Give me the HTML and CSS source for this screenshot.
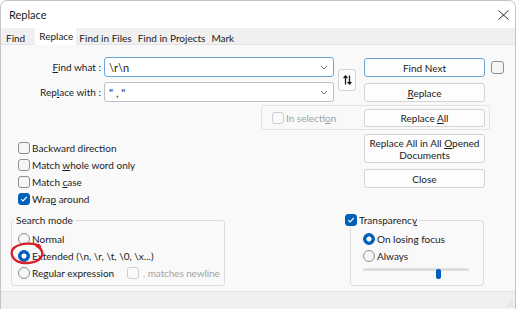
FILE: index.html
```html
<!DOCTYPE html>
<html lang="en">
<head>
  <meta charset="UTF-8" />
  <title>Replace</title>
  <link rel="stylesheet" href="styles.css">
</head>
<body>
  <div class="window">
    <div class="titlebar">
      <span class="title">Replace</span>
      <svg class="close" width="11" height="10" viewBox="0 0 11 10"><path d="M0.5 0.5L10.5 9.5M10.5 0.5L0.5 9.5" stroke="#2b2b2b" stroke-width="1" fill="none"/></svg>
    </div>

    <div class="tabs">
      <span class="tab">Find</span>
      <span class="tab active">Replace</span>
      <span class="tab">Find in Files</span>
      <span class="tab">Find in Projects</span>
      <span class="tab">Mark</span>
    </div>

    <div class="panel">
      <div class="row-top">
        <div class="fields">
          <span class="label"><u>F</u>ind what :</span>
          <div class="combo focus">
            <span>\r\n</span>
            <svg width="8" height="5" viewBox="0 0 8 5"><path d="M1 1l3 3 3-3" stroke="#6d6d6d" fill="none"/></svg>
          </div>
          <span class="label">Rep<u>l</u>ace with :</span>
          <div class="combo">
            <span>" , "</span>
            <svg width="8" height="5" viewBox="0 0 8 5"><path d="M1 1l3 3 3-3" stroke="#6d6d6d" fill="none"/></svg>
          </div>
        </div>
        <button class="swap">
          <svg width="9" height="10" viewBox="0 0 9 10"><path d="M2.5 9.5V1M0.6 3L2.5 1 4.4 3M6.5 0.5V9M4.6 7L6.5 9 8.4 7" stroke="#1b1b1b" stroke-width="1.3" fill="none"/></svg>
        </button>
        <div class="btn-col">
          <button class="btn default">Find Next</button>
          <button class="btn"><u>R</u>eplace</button>
        </div>
        <span class="check big"></span>
      </div>

      <div class="selbox">
        <label class="opt disabled"><span class="check"></span><span>In selecti<u>o</u>n</span></label>
        <button class="btn">Replace <u>A</u>ll</button>
      </div>

      <div class="row-mid">
        <div class="options">
          <label class="opt"><span class="check"></span><span>Backward direction</span></label>
          <label class="opt"><span class="check"></span><span>Match <u>w</u>hole word only</span></label>
          <label class="opt"><span class="check"></span><span>Match <u>c</u>ase</span></label>
          <label class="opt"><span class="check on"><svg width="10" height="10" viewBox="0 0 10 10"><path d="M2.2 5.2l1.8 1.8 3.8-4" stroke="#fff" stroke-width="1.1" fill="none"/></svg></span><span>Wra<u>p</u> around</span></label>
        </div>
        <div class="btn-col">
          <button class="btn tall">Replace All in All <u>O</u>pened<br>Documents</button>
          <button class="btn">Close</button>
        </div>
      </div>

      <div class="row-bottom">
        <fieldset class="group search">
          <legend>Search mode</legend>
          <label class="opt"><span class="radio"></span><span><u>N</u>ormal</span></label>
          <label class="opt marked">
            <span class="radio on"></span><span>Extended (\n, \r, \t, \0, \x...)</span>
            <svg class="circled" width="36" height="27" viewBox="0 0 36 27"><path d="M31 5.5C26 1.5 12 1.6 5.5 6.5 0.8 10.2 2.4 17.5 8.5 20.3 15 23.4 27 22.4 31.6 17 35 13 33 7.5 27.5 4.6" stroke="#d8202a" stroke-width="2.4" fill="none" stroke-linecap="round"/></svg>
          </label>
          <label class="opt">
            <span class="radio"></span><span class="regex">Regular expression</span>
            <span class="check off"></span><span class="muted">. matches newline</span>
          </label>
        </fieldset>

        <fieldset class="group transp">
          <legend><span class="check on"><svg width="10" height="10" viewBox="0 0 10 10"><path d="M2.2 5.2l1.8 1.8 3.8-4" stroke="#fff" stroke-width="1.1" fill="none"/></svg></span><span>Transparenc<u>y</u></span></legend>
          <label class="opt"><span class="radio on"></span><span>On losing focus</span></label>
          <label class="opt"><span class="radio"></span><span>Always</span></label>
          <div class="slider">
            <div class="track"></div>
            <div class="thumb" style="left: 69%"></div>
          </div>
        </fieldset>
      </div>
    </div>

    <div class="footer">
      <svg class="grip" width="6" height="6" viewBox="0 0 6 6"><circle cx="5" cy="1" r="0.6" fill="#9a9a9a"/><circle cx="5" cy="5" r="0.6" fill="#9a9a9a"/><circle cx="1" cy="5" r="0.6" fill="#9a9a9a"/><circle cx="3" cy="3" r="0.6" fill="#9a9a9a"/></svg>
    </div>
  </div>
</body>
</html>
```

FILE: styles.css
```css
body {
  margin: 0;
  background: #ffffff;
  font-family: Lato, "Noto Sans", sans-serif;
  font-size: 10px;
  color: #1b1b1b;
}
u {
  text-underline-offset: 1px;
}
.window {
  width: 516px;
  height: 309px;
  box-sizing: border-box;
  border: 1px solid #c4c4c4;
  border-bottom: none;
  border-radius: 7px 7px 0 0;
  overflow: hidden;
  display: flex;
  flex-direction: column;
  background: #f9f9f9;
}
.titlebar {
  height: 27px;
  flex: none;
  background: #ffffff;
  display: flex;
  align-items: center;
  justify-content: space-between;
  padding: 0 6px 0 8px;
}
.title {
  font-size: 11px;
}
.tabs {
  height: 16px;
  flex: none;
  background: #f0f0f0;
  border-bottom: 1px solid #e4e4e4;
  display: flex;
  padding-left: 2px;
}
.tab {
  padding: 3px 3px 0;
  line-height: 14px;
  white-space: nowrap;
}
.tab.active {
  background: #ffffff;
  margin: 0 0 -1px 7px;
  padding: 1px 3px 0 4px;
}
.panel {
  height: 246px;
  flex: none;
}
.footer {
  flex: 1;
  background: #f0f0f0;
  border-top: 1px solid #e2e2e2;
  display: flex;
  justify-content: flex-end;
  align-items: flex-end;
  padding: 0 2px 2px 0;
}

/* top block */
.row-top {
  display: flex;
  padding-top: 12px;
}
.fields {
  display: grid;
  grid-template-columns: 100px 230px;
  grid-auto-rows: 20px;
  column-gap: 3px;
  row-gap: 5px;
}
.label {
  text-align: right;
  line-height: 20px;
  white-space: nowrap;
}
.combo {
  box-sizing: border-box;
  border: 1px solid #bfbfbf;
  border-radius: 3px;
  background: #ffffff;
  display: flex;
  align-items: center;
  justify-content: space-between;
  padding: 0 5px 0 4px;
  font-size: 11px;
}
.combo.focus {
  border-color: #6aa5d8;
}
.swap {
  margin-left: 4px;
  align-self: center;
  width: 18px;
  height: 22px;
  box-sizing: border-box;
  border: 1px solid #d3d3d3;
  border-radius: 3px;
  background: #fdfdfd;
  padding: 0;
  display: flex;
  align-items: center;
  justify-content: center;
}
.btn-col {
  margin-left: 8px;
  width: 121px;
  display: flex;
  flex-direction: column;
  gap: 6px;
  padding-top: 1px;
}
.btn {
  height: 19px;
  box-sizing: border-box;
  border: 1px solid #d3d3d3;
  border-radius: 3px;
  background: #fdfdfd;
  font: inherit;
  color: inherit;
  padding: 0;
  line-height: 12px;
}
.btn.default {
  border-color: #6aa5d8;
}
.btn.tall {
  height: 29px;
}

/* checks and radios */
.check, .radio {
  width: 12px;
  height: 12px;
  flex: none;
  box-sizing: border-box;
  border: 1px solid #8e8e8e;
  background: #f6f6f6;
  border-radius: 3px;
  display: flex;
  align-items: center;
  justify-content: center;
}
.check.big {
  width: 13px;
  height: 13px;
  margin: 4px 0 0 6px;
}
.check.on {
  background: #005fb8;
  border-color: #005fb8;
}
.check.off {
  border-color: #cdcdcd;
  background: transparent;
}
.radio {
  border-radius: 50%;
}
.radio.on {
  border-color: #005fb8;
  background: radial-gradient(circle, #ffffff 0 2.3px, #005fb8 2.9px);
}
.opt {
  height: 17px;
  display: flex;
  align-items: center;
  gap: 2px;
  white-space: nowrap;
}
.opt.disabled, .muted {
  color: #a3a3a3;
}
.opt.disabled .check {
  border-color: #cdcdcd;
  background: transparent;
}

/* in selection box */
.selbox {
  margin: 3px 0 0 260px;
  width: 229px;
  height: 25px;
  box-sizing: border-box;
  border: 1px solid #e3e3e3;
  border-radius: 3px;
  display: flex;
  align-items: center;
  padding: 0 4px 0 10px;
}
.selbox .btn {
  margin-left: auto;
  width: 121px;
  height: 18px;
}

/* middle block */
.row-mid {
  display: flex;
  height: 77px;
}
.options {
  margin: 9px 0 0 17px;
  width: 346px;
  display: flex;
  flex-direction: column;
}
.row-mid .btn-col {
  margin: 4px 0 0;
  padding: 0;
}

/* group boxes */
.row-bottom {
  display: flex;
  gap: 125px;
  margin-top: 6px;
  padding-left: 10px;
}
.group {
  margin: 0;
  min-width: 0;
  box-sizing: border-box;
  border: 1px solid #dcdcdc;
  border-radius: 3px;
  padding: 3px 0 0 6px;
}
.group legend {
  line-height: 14px;
  padding: 0 2px;
  margin-left: -4px;
}
.search {
  width: 214px;
}
.marked {
  position: relative;
}
.circled {
  position: absolute;
  left: -9px;
  top: -6px;
}
.regex {
  width: 93px;
}
.search .check.off {
  margin-right: 2px;
}
.search .muted {
  letter-spacing: -0.1px;
}
.transp {
  width: 134px;
  padding: 3px 0 5px 12px;
}
.transp legend {
  display: flex;
  align-items: center;
  gap: 2px;
  margin-left: -18px;
  padding: 0 2px 0 0;
}
.slider {
  position: relative;
  width: 106px;
  height: 12px;
}
.track {
  margin-top: 4px;
  height: 3px;
  background: #dedede;
  border-radius: 2px;
}
.thumb {
  position: absolute;
  top: 1px;
  width: 5px;
  height: 10px;
  background: #005fb8;
  border-radius: 2px;
}
```
